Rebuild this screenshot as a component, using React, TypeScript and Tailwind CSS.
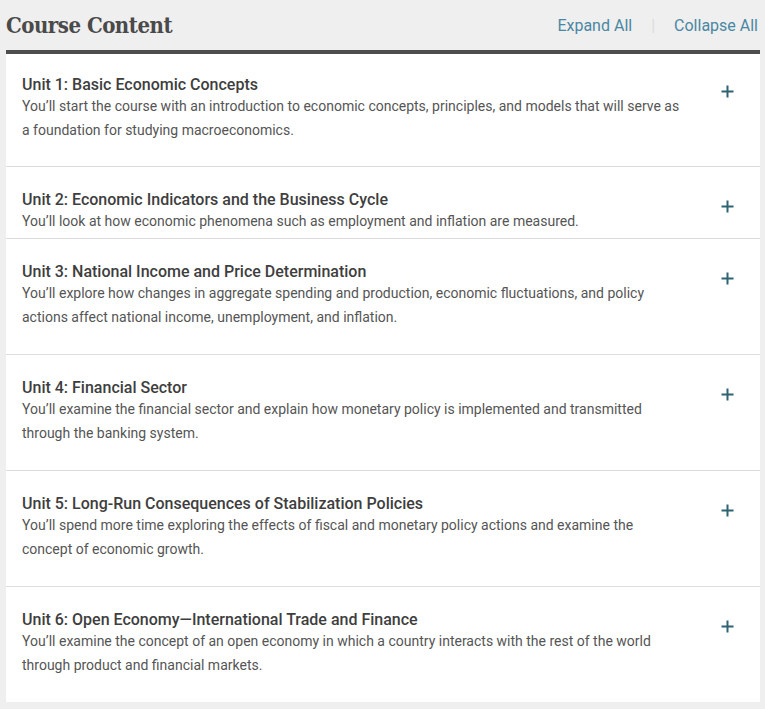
const units = [
	{
		title: "Unit 1: Basic Economic Concepts",
		text: "You’ll start the course with an introduction to economic concepts, principles, and models that will serve as a foundation for studying macroeconomics.",
		pb: "pb-[24px]",
		pt: "pt-[22px]",
	},
	{
		title: "Unit 2: Economic Indicators and the Business Cycle",
		text: "You’ll look at how economic phenomena such as employment and inflation are measured.",
		pb: "pb-[5px]",
		pt: "pt-[24px]",
	},
	{
		title: "Unit 3: National Income and Price Determination",
		text: "You’ll explore how changes in aggregate spending and production, economic fluctuations, and policy actions affect national income, unemployment, and inflation.",
		pb: "pb-[25px]",
		pt: "pt-[24px]",
	},
	{
		title: "Unit 4: Financial Sector",
		text: "You’ll examine the financial sector and explain how monetary policy is implemented and transmitted through the banking system.",
		pb: "pb-[25px]",
		pt: "pt-[24px]",
	},
	{
		title: "Unit 5: Long-Run Consequences of Stabilization Policies",
		text: "You’ll spend more time exploring the effects of fiscal and monetary policy actions and examine the concept of economic growth.",
		pb: "pb-[25px]",
		pt: "pt-[24px]",
	},
	{
		title: "Unit 6: Open Economy—International Trade and Finance",
		text: "You’ll examine the concept of an open economy in which a country interacts with the rest of the world through product and financial markets.",
		pb: "pb-[25px]",
		pt: "pt-[24px]",
	},
];

const Plus = () => (
	<svg width="13" height="13" viewBox="0 0 13 13" className="block">
		<path d="M6.5 0.5v12M0.5 6.5h12" stroke="#2f6272" strokeWidth="2" />
	</svg>
);

export default function App() {
	return (
		<div className="w-[765px] h-[709px] bg-[#efefef] font-['Roboto',sans-serif] overflow-hidden">
			<div className="h-[50px] flex items-center justify-between pl-[6px] pr-[7px]">
				<h1 className="font-['DejaVu_Serif_Condensed','DejaVu_Serif',serif] font-bold text-[22px] tracking-[-0.5px] text-[#4a4a4a] leading-none">
					Course Content
				</h1>
				<div className="flex items-center text-[16px] text-[#4a87a3] pt-[1px]">
					<span>Expand All</span>
					<span className="text-[#dcdcdc] mx-[19px]">|</span>
					<span>Collapse All</span>
				</div>
			</div>
			<div className="ml-[6px] mr-[5px] border-t-4 border-[#4d4d4d]">
				{units.map((u, i) => (
					<div
						key={i}
						className={`bg-white flex ${u.pt} ${u.pb} pl-[16px] pr-[26px] ${i < units.length - 1 ? "border-b border-[#dcdcdc]" : ""}`}
					>
						<div className="w-[664px] shrink-0">
							<div className="text-[16px] leading-[18px] font-medium text-[#3e3e3e]">{u.title}</div>
							<div className="text-[14px] leading-[24px] text-[#555555]">{u.text}</div>
						</div>
						<div className="ml-auto pt-[9px]">
							<Plus />
						</div>
					</div>
				))}
			</div>
		</div>
	);
}
